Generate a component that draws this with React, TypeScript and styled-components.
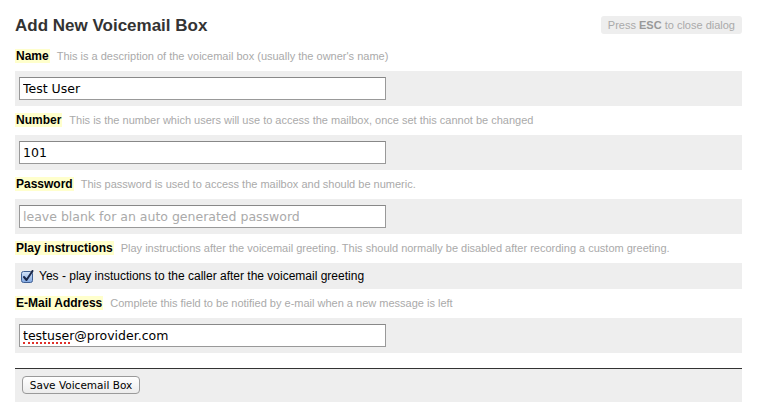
import React from "react";
import styled, { createGlobalStyle } from "styled-components";

const GlobalStyle = createGlobalStyle`
  body {
    margin: 0;
    background: #fff;
    font-family: "Liberation Sans", Arial, sans-serif;
  }
`;

const Page = styled.div`
  padding: 15px 18px 0 15px;
`;

const Header = styled.div`
  display: flex;
  justify-content: space-between;
  align-items: flex-start;
  height: 22px;
`;

const Title = styled.h1`
  margin: 0;
  font-size: 17px;
  line-height: 22px;
  font-weight: bold;
  color: #333;
`;

const EscBadge = styled.div`
  margin-top: 1px;
  height: 18px;
  line-height: 18px;
  padding: 0 7px;
  background: #eee;
  border-radius: 3px;
  font-size: 11px;
  color: #aaa;

  b {
    color: #999;
  }
`;

const Form = styled.div`
  padding-top: 5px;
`;

const LabelLine = styled.div`
  display: flex;
  align-items: baseline;
  margin: 7px 0 8px;
  line-height: 14px;
`;

const LabelName = styled.span`
  background: #ffffcc;
  font-size: 12px;
  font-weight: bold;
  color: #000;
  padding: 0 1px;
`;

const Help = styled.span`
  margin-left: 7px;
  font-size: 11px;
  color: #aaa;
`;

const Row = styled.div`
  background: #eee;
  padding: 6px 4px;
`;

const InputWrap = styled.div`
  position: relative;
  width: 367px;
`;

const TextInput = styled.input`
  box-sizing: border-box;
  display: block;
  width: 367px;
  height: 23px;
  margin: 0;
  padding: 0 3px;
  border: 1px solid #999;
  border-top-color: #888;
  background: #fff;
  font-family: "DejaVu Sans", sans-serif;
  font-size: 12.5px;
  color: #000;
  outline: none;

  &::placeholder {
    color: #aaa;
  }
`;

const SpellMark = styled.span<{ $width: number }>`
  position: absolute;
  left: 4px;
  top: 18px;
  width: ${(p) => p.$width}px;
  height: 0;
  border-bottom: 2px dotted #e0302a;
  pointer-events: none;
`;

const CheckRow = styled.label`
  display: flex;
  align-items: center;
  gap: 5px;
  height: 26px;
  padding-left: 6px;
  background: #eee;
  font-size: 12px;
  color: #000;
`;

const Divider = styled.div`
  height: 1px;
  margin-top: 15px;
  background: #333;
`;

const ButtonRow = styled.div`
  background: #eee;
  padding: 6px 7px 8px;
`;

const Button = styled.button`
  box-sizing: border-box;
  height: 18px;
  width: 118px;
  padding: 0;
  border: 1px solid #9a9a9a;
  border-radius: 4px;
  background: linear-gradient(#ffffff, #ececec);
  font-family: "DejaVu Sans", sans-serif;
  font-size: 10.5px;
  color: #000;
  line-height: 16px;
`;

const CheckIcon = () => (
  <svg width="13" height="13" viewBox="0 0 13 13">
    <defs>
      <linearGradient id="cb" x1="0" y1="0" x2="0" y2="1">
        <stop offset="0" stopColor="#d6e5f8" />
        <stop offset="1" stopColor="#7fa6e0" />
      </linearGradient>
    </defs>
    <rect x="0.5" y="1.5" width="11" height="11" rx="2" fill="url(#cb)" stroke="#3f5f93" />
    <path d="M3 7 L5.5 10 L11.5 1" fill="none" stroke="#1a2748" strokeWidth="2" strokeLinecap="round" strokeLinejoin="round" />
  </svg>
);

type FieldProps = {
  label: string;
  help: string;
  children: React.ReactNode;
};

const Field = ({ label, help, children }: FieldProps) => (
  <>
    <LabelLine>
      <LabelName>{label}</LabelName>
      <Help>{help}</Help>
    </LabelLine>
    {children}
  </>
);

const App = () => {
  return (
    <>
      <GlobalStyle />
      <Page>
        <Header>
          <Title>Add New Voicemail Box</Title>
          <EscBadge>
            Press <b>ESC</b> to close dialog
          </EscBadge>
        </Header>
        <Form>
          <Field label="Name" help="This is a description of the voicemail box (usually the owner's name)">
            <Row>
              <TextInput defaultValue="Test User" />
            </Row>
          </Field>
          <Field label="Number" help="This is the number which users will use to access the mailbox, once set this cannot be changed">
            <Row>
              <TextInput defaultValue="101" />
            </Row>
          </Field>
          <Field label="Password" help="This password is used to access the mailbox and should be numeric.">
            <Row>
              <TextInput placeholder="leave blank for an auto generated password" />
            </Row>
          </Field>
          <Field label="Play instructions" help="Play instructions after the voicemail greeting. This should normally be disabled after recording a custom greeting.">
            <CheckRow>
              <CheckIcon />
              Yes - play instuctions to the caller after the voicemail greeting
            </CheckRow>
          </Field>
          <Field label="E-Mail Address" help="Complete this field to be notified by e-mail when a new message is left">
            <Row>
              <InputWrap>
                <TextInput defaultValue="testuser@provider.com" spellCheck={false} />
                <SpellMark $width={47} />
              </InputWrap>
            </Row>
          </Field>
          <Divider />
          <ButtonRow>
            <Button>Save Voicemail Box</Button>
          </ButtonRow>
        </Form>
      </Page>
    </>
  );
};

export default App;
